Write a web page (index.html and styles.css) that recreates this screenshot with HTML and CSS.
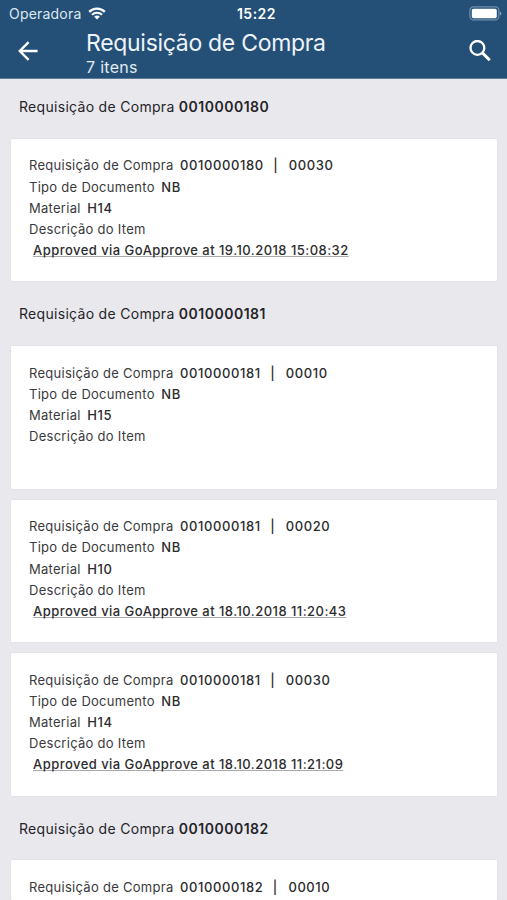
FILE: index.html
```
<!DOCTYPE html>
<html lang="pt">
<head>
    <meta charset="UTF-8">
    <meta name="viewport" content="width=device-width, initial-scale=1.0">
    <title>Requisição de Compra</title>
    <link rel="stylesheet" href="styles.css">
</head>
<body>

    <header class="header">
        <!-- Status bar -->
        <div class="status-bar">
            <div class="carrier">
                <span class="carrier-name">Operadora</span>
                <svg class="wifi" viewBox="0 0 18 13" width="18" height="13">
                    <path d="M1.2 4.9 A11 11 0 0 1 16.8 4.9" fill="none" stroke="#fff" stroke-width="2.4"/>
                    <path d="M4 7.8 A7.1 7.1 0 0 1 14 7.8" fill="none" stroke="#fff" stroke-width="2.2"/>
                    <path d="M9 12.6 L6.2 9.8 A4 4 0 0 1 11.8 9.8 Z" fill="#fff"/>
                </svg>
            </div>
            <span class="clock">15:22</span>
            <svg class="battery" viewBox="0 0 33 15" width="33" height="15">
                <rect x="0.9" y="0.9" width="29" height="13" rx="3.6" fill="none" stroke="#6f8fad" stroke-width="1.2"/>
                <rect x="2.8" y="2.8" width="25" height="9.4" rx="1.6" fill="#fff"/>
                <path d="M31 5.4 Q32.4 6.2 32.4 7.4 Q32.4 8.6 31 9.4 Z" fill="#8ba5bd"/>
            </svg>
        </div>

        <!-- Navigation bar -->
        <div class="nav-bar">
            <svg class="back" viewBox="0 0 20 20" width="20" height="20">
                <path d="M19.6 10 H2 M10.6 1.2 L1.8 10 L10.6 18.8" fill="none" stroke="#fff" stroke-width="2.4"/>
            </svg>
            <div class="titles">
                <h1 class="title">Requisição de Compra</h1>
                <p class="subtitle">7 itens</p>
            </div>
            <svg class="search" viewBox="0 0 22 22" width="22" height="22">
                <circle cx="8.4" cy="7.9" r="6.9" fill="none" stroke="#fff" stroke-width="2.3"/>
                <path d="M13.4 12.9 L20.8 20.3" fill="none" stroke="#fff" stroke-width="2.9"/>
            </svg>
        </div>
    </header>

    <main class="list">
        <h2 class="group">Requisição de Compra <b>0010000180</b></h2>
        <div class="card">
            <p>Requisição de Compra <b>0010000180</b><b class="sep">|</b><b>00030</b></p>
            <p>Tipo de Documento <b>NB</b></p>
            <p>Material <b>H14</b></p>
            <p>Descrição do Item</p>
            <p class="desc"><span>Approved via GoApprove at 19.10.2018 15:08:32</span></p>
        </div>

        <h2 class="group">Requisição de Compra <b>0010000181</b></h2>
        <div class="card">
            <p>Requisição de Compra <b>0010000181</b><b class="sep">|</b><b>00010</b></p>
            <p>Tipo de Documento <b>NB</b></p>
            <p>Material <b>H15</b></p>
            <p>Descrição do Item</p>
        </div>
        <div class="card">
            <p>Requisição de Compra <b>0010000181</b><b class="sep">|</b><b>00020</b></p>
            <p>Tipo de Documento <b>NB</b></p>
            <p>Material <b>H10</b></p>
            <p>Descrição do Item</p>
            <p class="desc"><span>Approved via GoApprove at 18.10.2018 11:20:43</span></p>
        </div>
        <div class="card">
            <p>Requisição de Compra <b>0010000181</b><b class="sep">|</b><b>00030</b></p>
            <p>Tipo de Documento <b>NB</b></p>
            <p>Material <b>H14</b></p>
            <p>Descrição do Item</p>
            <p class="desc"><span>Approved via GoApprove at 18.10.2018 11:21:09</span></p>
        </div>

        <h2 class="group">Requisição de Compra <b>0010000182</b></h2>
        <div class="card card-last">
            <p>Requisição de Compra <b>0010000182</b><b class="sep">|</b><b>00010</b></p>
        </div>
    </main>

</body>
</html>
```
FILE: styles.css
```
* {
    margin: 0;
    padding: 0;
    box-sizing: border-box;
}

body {
    display: flex;
    flex-direction: column;
    height: 100vh;
    overflow: hidden;
    font-family: 'Inter', 'Liberation Sans', sans-serif;
    background-color: #e9e8ed;
    color: #3a3a3c;
}

/* Header */
.header {
    flex: none;
    height: 79px;
    background-color: #245078;
    border-bottom: 1px solid #5d7c9a;
    color: #fff;
}

.status-bar {
    display: grid;
    grid-template-columns: 1fr auto 1fr;
    align-items: center;
    height: 27px;
    padding: 0 5px 0 9px;
}

.carrier {
    display: flex;
    align-items: center;
    gap: 7px;
}

.carrier-name {
    font-size: 14px;
    letter-spacing: 0.2px;
    color: #dfe7ee;
}

.clock {
    padding-left: 2px;
    font-size: 14px;
    font-weight: 600;
    letter-spacing: 0.5px;
}

.battery {
    justify-self: end;
}

.nav-bar {
    display: flex;
    align-items: center;
    height: 48px;
    padding: 0 16px 0 18px;
}

.titles {
    flex: 1;
    margin-left: 48px;
    padding-top: 3px;
}

.title {
    font-size: 23px;
    font-weight: 400;
    line-height: 28px;
    letter-spacing: -0.3px;
    color: #eef3f7;
}

.subtitle {
    font-size: 16px;
    line-height: 20px;
    letter-spacing: 0.3px;
    color: #e3eaf0;
}

/* List */
.list {
    flex: 1;
    min-height: 0;
    padding: 6px 10px 0 11px;
    overflow: hidden;
}

.group {
    height: 53.8px;
    padding-left: 8px;
    font-size: 14px;
    font-weight: 400;
    line-height: 43px;
    letter-spacing: 0.3px;
    color: #242428;
}

.group b {
    font-weight: 600;
    letter-spacing: 0.5px;
}

.card {
    height: 142.5px;
    margin-bottom: 11px;
    padding: 16.5px 18px;
    background-color: #fff;
    border-radius: 1px;
    box-shadow: 0 0 2px rgba(0, 0, 0, 0.1);
    font-size: 13px;
    line-height: 21.2px;
    letter-spacing: 0.28px;
}

.card b {
    margin-left: 2.5px;
    font-weight: 500;
    letter-spacing: 0.6px;
    color: #2c2c2e;
}

.card .sep {
    margin: 0 8px 0 9.5px;
}

/* Runs on below the fold */
.card-last {
    height: 40px;
    margin-bottom: 0;
    padding-bottom: 0;
}

.desc {
    padding-left: 4px;
    font-weight: 500;
    letter-spacing: 0.46px;
    color: #2c2c2e;
}

.desc span {
    text-decoration: underline;
    text-decoration-color: #aaa;
    text-decoration-thickness: 1px;
    text-decoration-skip-ink: none;
}
```
